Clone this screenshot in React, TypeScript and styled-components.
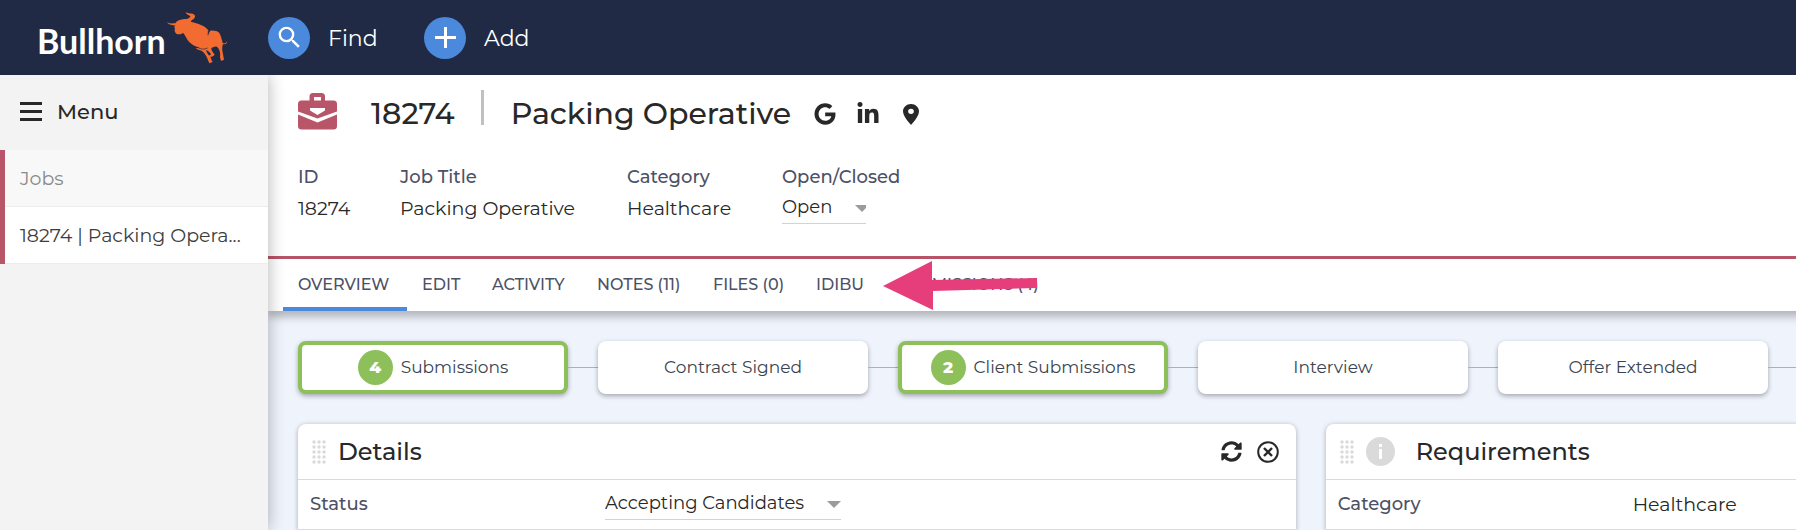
import React from 'react';
import styled, { createGlobalStyle } from 'styled-components';
import { FaGoogle, FaLinkedinIn, FaSyncAlt } from 'react-icons/fa';
import { MdSearch } from 'react-icons/md';

const color = {
  navy: '#212a45',
  blue: '#4a89dc',
  job: '#b85568',
  green: '#8dc05a',
  ink: '#282828',
  label: '#4d5166',
  stage: '#3a4450',
  canvas: '#eff3fc',
  line: '#d9dadd',
};

const GlobalStyle = createGlobalStyle`
  *, *::before, *::after { box-sizing: border-box; }
  html, body { margin: 0; }
  body {
    background: ${color.canvas};
    color: ${color.ink};
    font-family: Montserrat, Inter, "Liberation Sans", sans-serif;
    font-size: 18px;
    overflow: hidden;
  }
  button, select { font: inherit; color: inherit; }
  h1, h2, p, dl, dd, ul { margin: 0; padding: 0; }
`;

const Page = styled.div`
  display: flex;
  flex-direction: column;
  min-height: 100vh;
`;

const TopBar = styled.header`
  position: relative;
  z-index: 3;
  display: flex;
  align-items: center;
  height: 75px;
  background: ${color.navy};
  color: #fff;
`;

const Brand = styled.a`
  display: flex;
  align-items: center;
  width: 268px;
  padding-left: 37px;
  color: #fff;
  text-decoration: none;
`;

const BrandName = styled.span`
  padding-top: 6px;
  font-family: Lato, sans-serif;
  font-size: 34px;
  font-weight: 700;
  line-height: 40px;
`;

const TopAction = styled.button<{ $width: number }>`
  display: flex;
  align-items: center;
  gap: 18px;
  width: ${(p) => p.$width}px;
  padding: 0;
  border: 0;
  background: none;
  font-size: 22px;
  cursor: pointer;
`;

const ActionLabel = styled.span`
  padding-top: 2px;
`;

const Round = styled.span`
  display: flex;
  align-items: center;
  justify-content: center;
  width: 42px;
  height: 42px;
  border-radius: 50%;
  background: ${color.blue};
`;

const Body = styled.div`
  display: flex;
  flex: 1;
`;

const Sidebar = styled.nav`
  position: relative;
  z-index: 2;
  flex: 0 0 268px;
  background: #f3f3f3;
  box-shadow: 0 0 16px rgba(0, 0, 0, 0.3);
`;

const MenuButton = styled.button`
  display: flex;
  align-items: center;
  gap: 15px;
  width: 100%;
  height: 75px;
  padding: 0 20px 2px;
  border: 0;
  background: none;
  font-size: 21px;
  font-weight: 500;
  cursor: pointer;
`;

const SideLink = styled.a<{ $active?: boolean }>`
  display: block;
  height: 57px;
  padding: 1px 0 0 15px;
  border-left: 5px solid ${color.job};
  box-shadow: inset 0 -1px #ececec;
  background: ${(p) => (p.$active ? '#fff' : '#f8f8f8')};
  color: ${(p) => (p.$active ? '#3d3d3d' : '#8b8b8b')};
  font-size: 19px;
  line-height: 56px;
  text-decoration: none;
  white-space: nowrap;
`;

const Main = styled.main`
  flex: 1;
  min-width: 0;
  overflow: hidden;
`;

const RecordHeader = styled.section`
  height: 184px;
  padding-left: 30px;
  border-bottom: 3px solid ${color.job};
  background: #fff;
`;

const TitleRow = styled.div`
  display: flex;
  align-items: center;
  height: 78px;
`;

const CaseIcon = styled.svg`
  margin-bottom: 6px;
`;

const Title = styled.h1`
  display: flex;
  align-items: center;
  margin-left: 34px;
  font-size: 30px;
  font-weight: 500;
  line-height: 40px;
  white-space: nowrap;
`;

const Divider = styled.span`
  width: 3px;
  height: 35px;
  margin: 0 27px 14px 26px;
  background: #c0c0c0;
`;

const Lookups = styled.div`
  display: flex;
  gap: 21px;
  margin-left: 23px;
`;

const IconButton = styled.button`
  display: flex;
  align-items: center;
  justify-content: center;
  width: 22px;
  height: 22px;
  padding: 0;
  border: 0;
  background: none;
  font-size: 22px;
  cursor: pointer;
`;

const Fields = styled.dl`
  display: grid;
  grid-template-columns: 102px 227px 155px 130px;
  padding-top: 10px;
`;

const Field = styled.div`
  line-height: 28px;
  white-space: nowrap;
`;

const FieldLabel = styled.dt`
  height: 29px;
  color: ${color.label};
  font-weight: 500;
`;

const FieldValue = styled.dd`
  height: 32px;
  font-size: 19px;
  line-height: 34px;
`;

const Picker = styled.span<{ $width: number }>`
  position: relative;
  display: block;
  width: ${(p) => p.$width}px;
  height: 32px;
  border-bottom: 1px solid #d3d3d3;
  font-size: 18px;

  select {
    display: block;
    width: 100%;
    height: 31px;
    padding: 0 0 1px;
    border: 0;
    background: none;
    appearance: none;
    line-height: 30px;
  }

  svg {
    position: absolute;
    right: 0;
    top: 13px;
    pointer-events: none;
  }
`;

const TabBar = styled.nav`
  position: relative;
  z-index: 1;
  display: grid;
  grid-template-columns: 124px 70px 105px 116px 103px 81px 176px;
  height: 52px;
  margin-right: -16px;
  padding-left: 15px;
  background: #fff;
  box-shadow: 0 6px 8px rgba(0, 0, 0, 0.25);
`;

const Tab = styled.a<{ $active?: boolean }>`
  height: 52px;
  padding: 4px 0 0 15px;
  border-bottom: 4px solid ${(p) => (p.$active ? color.blue : 'transparent')};
  color: ${color.label};
  font-size: 16px;
  font-weight: 500;
  line-height: 44px;
  text-decoration: none;
  white-space: nowrap;
`;

const Pointer = styled.svg`
  position: absolute;
  left: 615px;
  top: 1px;
`;

const Stages = styled.ul`
  display: flex;
  padding: 30px 0 0 30px;
  list-style: none;
`;

const StageItem = styled.li`
  display: flex;
  flex: none;
  align-items: center;

  &::after {
    content: '';
    width: 30px;
    height: 1px;
    background: #b0b0b0;
  }
`;

const Stage = styled.button<{ $filled: boolean }>`
  display: flex;
  align-items: center;
  justify-content: center;
  gap: 8px;
  width: 270px;
  height: 53px;
  padding: 0 0 1px;
  border: ${(p) => (p.$filled ? `4px solid ${color.green}` : '0')};
  border-radius: 8px;
  background: #fff;
  box-shadow: 0 2px 5px rgba(0, 0, 0, 0.32);
  color: ${color.stage};
  font-size: 17px;
  cursor: pointer;
`;

const Count = styled.span`
  width: 35px;
  height: 35px;
  border-radius: 50%;
  background: ${color.green};
  color: #fff;
  font-size: 17px;
  font-weight: 800;
  line-height: 35px;
`;

const Panels = styled.div`
  display: flex;
  gap: 30px;
  padding: 30px 0 0 30px;
`;

const Panel = styled.section`
  flex: 0 0 66.6%;
  border-radius: 8px 8px 0 0;
  background: #fff;
  box-shadow: 0 1px 5px rgba(0, 0, 0, 0.3);
`;

const PanelHead = styled.header`
  display: flex;
  align-items: center;
  height: 56px;
  padding: 0 17px 0 14px;
  border-bottom: 1px solid ${color.line};
`;

const PanelTitle = styled.h2<{ $gap: number }>`
  flex: 1;
  margin-left: ${(p) => p.$gap}px;
  font-size: 24px;
  font-weight: 500;
  line-height: 32px;
`;

const PanelTools = styled.div`
  display: flex;
  gap: 14px;
`;

const Info = styled.svg`
  margin-left: 12px;
`;

const PanelRow = styled.div`
  display: flex;
  align-items: center;
  height: 50px;
  padding: 0 0 1px 12px;
  border-bottom: 1px solid ${color.line};
`;

const RowLabel = styled.label`
  width: 295px;
  padding-bottom: 1px;
  color: ${color.label};
  font-weight: 500;
`;

const RowValue = styled.span`
  font-size: 19px;
`;

const Bull = () => (
  <svg width="62" height="54" viewBox="48 32 186 162" aria-hidden="true">
    <path
      fill="#f26b30"
      d="M107 36C117 41 124 38 131 42C136 45 137 50 132 55C127 59 123 60 122 64C138 67 155 73 165 80C169 84 173 87 175 90L174 103L181 91C191 90 203 92 208 98C213 106 215 117 218 128C222 130 228 131 230 123C233 128 227 134 219 131C216 139 216 148 218 156L222 178L213 182L210 170C212 158 209 146 201 139C196 137 190 139 184 144C184 151 189 157 194 163L189 168L182 170L177 166L183 162C180 156 175 151 168 149C170 158 176 164 181 170C184 175 184 180 188 185L178 189C172 173 167 158 154 151L141 147L138 143L150 142C137 138 125 133 117 124C109 115 106 104 99 97C95 102 88 103 80 101C75 98 72 91 75 84C71 81 74 78 76 75C66 76 54 72 51 66C60 71 68 69 76 69C80 61 91 57 104 56C113 56 117 54 121 49C120 44 110 45 107 36Z"
    />
    <path fill="none" stroke={color.navy} strokeWidth="2" d="M175 90l-1 15M141 141c10 6 22 7 32 2" />
  </svg>
);

const Briefcase = () => (
  <CaseIcon width="39" height="37" viewBox="0 0 39 37" aria-hidden="true">
    <path
      fill={color.job}
      fillRule="evenodd"
      d="M11.500 7.500V3.500q0-3.500 3.500-3.500h8.500q3.500 0 3.500 3.500v4h8.500q3.500 0 3.500 3.500v7.500L19.500 25.500 0 18.500V11q0-3.500 3.500-3.500zM16 4v3.500h7V4zM12 15v2.500l7.500 4.500 7.500-4.500V15z"
    />
    <path fill={color.job} d="M0 21.500L19.500 29.500 39 21.500V33q0 3.500-3.500 3.500h-32Q0 36.500 0 33z" />
  </CaseIcon>
);

const Caret = ({ width }: { width: number }) => (
  <svg width={width} height="7" viewBox="0 0 14 7" preserveAspectRatio="xMinYMin slice" aria-hidden="true">
    <path fill="#9b9b9b" d="M0 0h14L7 7z" />
  </svg>
);

const Grip = () => (
  <svg width="14" height="24" viewBox="0 0 14 24" fill="#dadada" aria-hidden="true">
    {[2, 7, 12].map((x) => [2, 7, 12, 17, 22].map((y) => <circle key={`${x}-${y}`} cx={x} cy={y} r="1.700" />))}
  </svg>
);

const tabs = ['OVERVIEW', 'EDIT', 'ACTIVITY', 'NOTES (11)', 'FILES (0)', 'IDIBU', 'SUBMISSIONS (4)'];

const stages: { name: string; count?: number }[] = [
  { name: 'Submissions', count: 4 },
  { name: 'Contract Signed' },
  { name: 'Client Submissions', count: 2 },
  { name: 'Interview' },
  { name: 'Offer Extended' },
];

export default function App() {
  return (
    <Page>
      <GlobalStyle />
      <TopBar>
        <Brand href="#">
          <BrandName>Bullhorn</BrandName>
          <Bull />
        </Brand>
        <TopAction $width={156}>
          <Round>
            <MdSearch size={29} />
          </Round>
          <ActionLabel>Find</ActionLabel>
        </TopAction>
        <TopAction $width={120}>
          <Round>
            <svg width="21" height="21" viewBox="0 0 21 21" stroke="#fff" strokeWidth="3" aria-hidden="true">
              <path d="M10.500 0v21M0 10.500h21" />
            </svg>
          </Round>
          <ActionLabel>Add</ActionLabel>
        </TopAction>
      </TopBar>
      <Body>
        <Sidebar>
          <MenuButton>
            <svg width="22" height="19" viewBox="0 0 22 19" fill={color.ink} aria-hidden="true">
              <path d="M0 0h22v3H0zM0 8h22v3H0zM0 16h22v3H0z" />
            </svg>
            Menu
          </MenuButton>
          <SideLink href="#">Jobs</SideLink>
          <SideLink href="#" $active>
            18274 | Packing Opera...
          </SideLink>
        </Sidebar>
        <Main>
          <RecordHeader>
            <TitleRow>
              <Briefcase />
              <Title>
                18274
                <Divider />
                Packing Operative
              </Title>
              <Lookups>
                <IconButton aria-label="Google">
                  <FaGoogle />
                </IconButton>
                <IconButton aria-label="LinkedIn">
                  <FaLinkedinIn size={24} />
                </IconButton>
                <IconButton aria-label="Map">
                  <svg width="16" height="21" viewBox="5 2 14 20" preserveAspectRatio="none" fill={color.ink}>
                    <path d="M12 2C8.130 2 5 5.130 5 9c0 5.250 7 13 7 13s7-7.750 7-13c0-3.870-3.130-7-7-7zm0 9.500a2.500 2.500 0 0 1 0-5 2.500 2.500 0 0 1 0 5z" />
                  </svg>
                </IconButton>
              </Lookups>
            </TitleRow>
            <Fields>
              <Field>
                <FieldLabel>ID</FieldLabel>
                <FieldValue>18274</FieldValue>
              </Field>
              <Field>
                <FieldLabel>Job Title</FieldLabel>
                <FieldValue>Packing Operative</FieldValue>
              </Field>
              <Field>
                <FieldLabel>Category</FieldLabel>
                <FieldValue>Healthcare</FieldValue>
              </Field>
              <Field>
                <FieldLabel>
                  <label htmlFor="open-closed">Open/Closed</label>
                </FieldLabel>
                <FieldValue>
                  <Picker $width={84}>
                    <select id="open-closed">
                      <option>Open</option>
                    </select>
                    <Caret width={11} />
                  </Picker>
                </FieldValue>
              </Field>
            </Fields>
          </RecordHeader>
          <TabBar>
            {tabs.map((name, i) => (
              <Tab key={name} href="#" $active={i === 0}>
                {name}
              </Tab>
            ))}
            <Pointer width="156" height="50" viewBox="0 0 156 50" aria-hidden="true">
              <path fill="#e63e7b" d="M0 26L49 1v19l105-2v10L50 31v19z" />
            </Pointer>
          </TabBar>
          <Stages>
            {stages.map(({ name, count }) => (
              <StageItem key={name}>
                <Stage $filled={count !== undefined}>
                  {count !== undefined && <Count>{count}</Count>}
                  {name}
                </Stage>
              </StageItem>
            ))}
          </Stages>
          <Panels>
            <Panel>
              <PanelHead>
                <Grip />
                <PanelTitle $gap={12}>Details</PanelTitle>
                <PanelTools>
                  <IconButton aria-label="Refresh">
                    <FaSyncAlt size={21} />
                  </IconButton>
                  <IconButton aria-label="Close">
                    <svg width="22" height="22" viewBox="0 0 22 22" fill="none" stroke={color.ink} strokeWidth="2">
                      <circle cx="11" cy="11" r="9.800" />
                      <path d="M7 7l8 8M15 7l-8 8" strokeWidth="2.400" />
                    </svg>
                  </IconButton>
                </PanelTools>
              </PanelHead>
              <PanelRow>
                <RowLabel htmlFor="status">Status</RowLabel>
                <Picker $width={236}>
                  <select id="status">
                    <option>Accepting Candidates</option>
                  </select>
                  <Caret width={14} />
                </Picker>
              </PanelRow>
            </Panel>
            <Panel>
              <PanelHead>
                <Grip />
                <Info width="29" height="29" viewBox="0 0 29 29" aria-hidden="true">
                  <circle cx="14.500" cy="14.500" r="14.500" fill="#dadada" />
                  <path fill="#fff" d="M13 7h3v3h-3zM13 12h3v10h-3z" />
                </Info>
                <PanelTitle $gap={21}>Requirements</PanelTitle>
              </PanelHead>
              <PanelRow>
                <RowLabel as="span">Category</RowLabel>
                <RowValue>Healthcare</RowValue>
              </PanelRow>
            </Panel>
          </Panels>
        </Main>
      </Body>
    </Page>
  );
}
